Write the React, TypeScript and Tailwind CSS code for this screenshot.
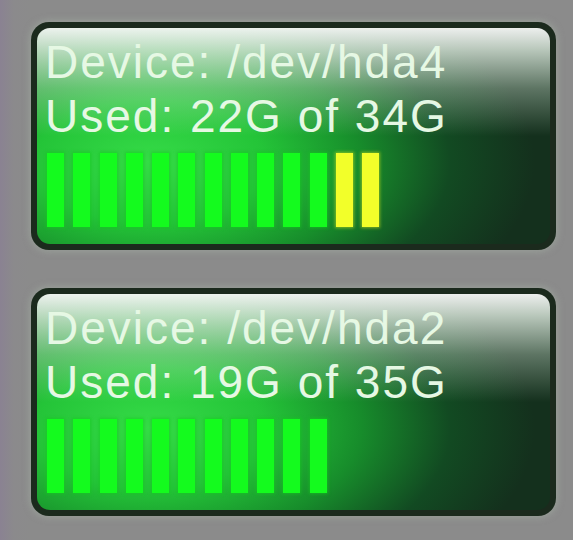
import React from "react";

type Disk = { device: string; used: string; total: string; green: number; yellow: number };

const disks: Disk[] = [
  { device: "/dev/hda4", used: "22G", total: "34G", green: 11, yellow: 2 },
  { device: "/dev/hda2", used: "19G", total: "35G", green: 11, yellow: 0 },
];

function Card({ d }: { d: Disk }) {
  const bars = [
    ...Array.from({ length: d.green }, () => "g"),
    ...Array.from({ length: d.yellow }, () => "y"),
  ];
  return (
    <div className="w-[525px] h-[228px] rounded-[18px] bg-[#1b2a1d] p-[6px] shadow-[0_0_6px_2px_rgba(160,170,160,0.6)]">
      <div className="h-full w-full rounded-[13px] overflow-hidden bg-[linear-gradient(180deg,rgba(255,255,255,0.92)_0%,rgba(240,250,240,0.75)_10%,rgba(230,245,230,0.35)_28%,rgba(255,255,255,0)_50%),radial-gradient(ellipse_75%_95%_at_22%_62%,#36dc48_0%,#24c438_30%,#178c2b_55%,#124a22_78%,#14301d_100%)] pl-[8px] pt-[7px]">
        <div className="font-['Liberation_Sans',Arial,sans-serif] text-[46px] leading-[54px] tracking-[2px] text-[#e6f8e4] whitespace-nowrap">
          <div>Device: {d.device}</div>
          <div>Used: {d.used} of {d.total}</div>
        </div>
        <div className="mt-[10px] ml-[2px] flex gap-[9.25px] h-[74px]">
          {bars.map((b, i) =>
            b === "g" ? (
              <div key={i} className="w-[17px] h-full bg-[#14fb1e] shadow-[0_0_3px_1px_rgba(20,200,30,0.6)]" />
            ) : (
              <div key={i} className="w-[17px] h-full bg-[#f2ff2a] shadow-[0_0_3px_1px_rgba(200,220,30,0.6)]" />
            )
          )}
        </div>
      </div>
    </div>
  );
}

export default function App() {
  return (
    <div className="w-[573px] h-[540px] bg-[linear-gradient(90deg,#8a8292_0px,#8b8a8c_14px,#8b8b8b_30px)] overflow-hidden pt-[22px] pl-[31px] flex flex-col gap-[38px]">
      {disks.map((d, i) => (
        <Card key={i} d={d} />
      ))}
    </div>
  );
}
